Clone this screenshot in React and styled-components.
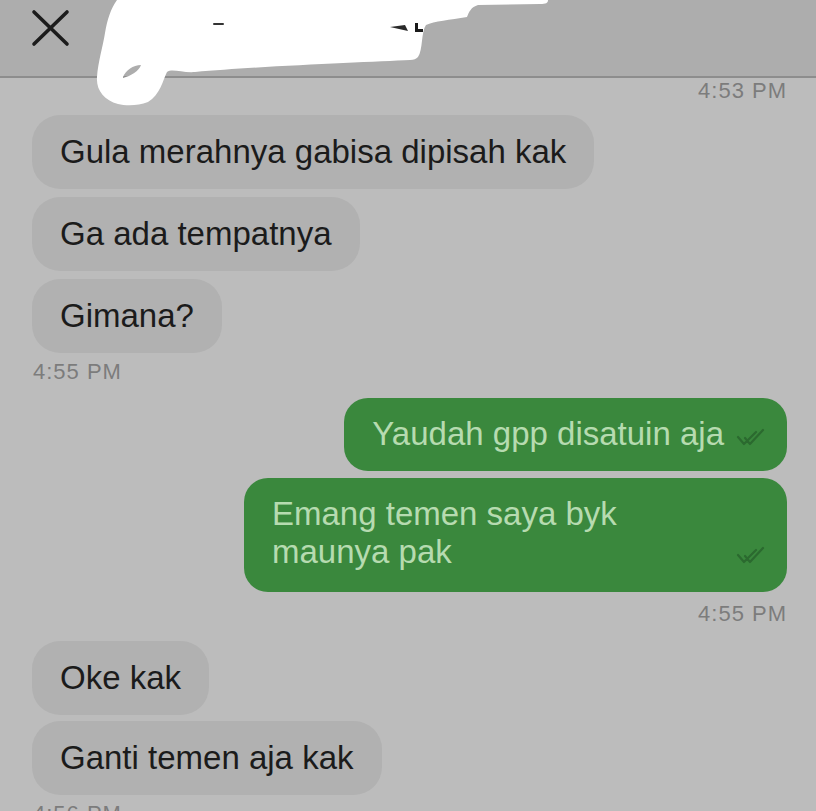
import React from "react";
import styled, { createGlobalStyle } from "styled-components";

const GlobalStyle = createGlobalStyle`
  html, body {
    margin: 0;
    padding: 0;
    background: #bcbcbc;
  }
  * {
    box-sizing: border-box;
  }
`;

const messages = [
  { kind: "time", side: "right", text: "4:53 PM", top: 2 },
  { kind: "in", text: "Gula merahnya gabisa dipisah kak", top: 13 },
  { kind: "in", text: "Ga ada tempatnya", top: 8 },
  { kind: "in", text: "Gimana?", top: 8 },
  { kind: "time", side: "left", text: "4:55 PM", top: 8 },
  { kind: "out", text: "Yaudah gpp disatuin aja", top: 15 },
  { kind: "out", text: "Emang temen saya byk maunya pak", top: 7, tall: true },
  { kind: "time", side: "right", text: "4:55 PM", top: 11 },
  { kind: "in", text: "Oke kak", top: 16 },
  { kind: "in", text: "Ganti temen aja kak", top: 6 },
  { kind: "time", side: "left", text: "4:56 PM", top: 8 },
];

const CloseIcon = () => (
  <svg width="40" height="38" viewBox="0 0 40 38">
    <path
      d="M3 3 L36 35 M36 3 L3 35"
      stroke="#1c1c1c"
      strokeWidth="3.6"
      strokeLinecap="round"
      fill="none"
    />
  </svg>
);

const DoubleCheck = () => (
  <svg width="30" height="22" viewBox="0 0 30 22">
    <path
      d="M2 11 L8 18 L20 6 M9 12 L14 18 L27 4"
      stroke="#2b6a2f"
      strokeWidth="2.2"
      strokeLinecap="round"
      strokeLinejoin="round"
      fill="none"
    />
  </svg>
);

// white marker scribble that hides the contact name
const Scribble = () => (
  <ScribbleSvg width="560" height="110" viewBox="0 0 560 110">
    <path
      d="M117 0 L548 0 C548 3 546 4 540 4 L478 5 C471 7 469 12 467 17
         C450 20 434 21 426 25 C421 32 423 50 418 57 C416 59 414 60 410 60
         C370 62 260 66 195 72 C182 73 172 68 167 72 C163 80 160 95 148 102
         C138 106 126 106 118 104 C104 100 96 90 97 77
         C98 62 103 46 105 33 C107 20 111 8 117 0 Z
         M123 77 C126 70 133 65 141 65 C139 71 131 76 123 78 Z"
      fill="#ffffff"
      fillRule="evenodd"
    />
    <rect x="213" y="23" width="11" height="2" rx="1" fill="#333" />
    <path d="M390 27 L405 25 L408 31 Z" fill="#2a2a2a" />
    <path d="M415 23 L418 23 L418 29 L423 29 L423 32 L415 32 Z" fill="#1a1a1a" />
  </ScribbleSvg>
);

export default function App() {
  return (
    <Screen>
      <GlobalStyle />
      <Header>
        <CloseButton>
          <CloseIcon />
        </CloseButton>
      </Header>
      <Scribble />
      <Thread>
        {messages.map((m, i) => {
          if (m.kind === "time") {
            return (
              <Stamp key={i} $side={m.side} $top={m.top}>
                {m.text}
              </Stamp>
            );
          }
          if (m.kind === "in") {
            return (
              <InBubble key={i} $top={m.top}>
                {m.text}
              </InBubble>
            );
          }
          return (
            <OutBubble key={i} $top={m.top} $tall={m.tall}>
              <OutText>{m.text}</OutText>
              <CheckWrap>
                <DoubleCheck />
              </CheckWrap>
            </OutBubble>
          );
        })}
      </Thread>
    </Screen>
  );
}

const Screen = styled.div`
  position: relative;
  width: 816px;
  height: 811px;
  overflow: hidden;
  background: #bcbcbc;
  font-family: "Liberation Sans", Arial, Helvetica, sans-serif;
`;

const Header = styled.div`
  height: 78px;
  display: flex;
  align-items: flex-start;
  padding: 9px 0 0 31px;
  background: #adadad;
  border-bottom: 2px solid #8d8d8d;
`;

const CloseButton = styled.div`
  width: 40px;
  height: 38px;
  display: flex;
`;

const ScribbleSvg = styled.svg`
  position: absolute;
  left: 0;
  top: 0;
`;

const Thread = styled.div`
  display: flex;
  flex-direction: column;
  padding: 0 29px 0 32px;
`;

const Stamp = styled.div`
  align-self: ${(p) => (p.$side === "right" ? "flex-end" : "flex-start")};
  margin-top: ${(p) => p.$top}px;
  margin-left: ${(p) => (p.$side === "left" ? 1 : 0)}px;
  font-size: 22px;
  line-height: 22px;
  letter-spacing: 1px;
  color: #7c7c7c;
`;

const InBubble = styled.div`
  align-self: flex-start;
  margin-top: ${(p) => p.$top}px;
  padding: 18px 28px;
  background: #b1b1b1;
  border-radius: 28px;
  font-size: 33px;
  line-height: 38px;
  color: #1b1b1b;
`;

const OutBubble = styled.div`
  align-self: flex-end;
  max-width: 543px;
  margin-top: ${(p) => p.$top}px;
  display: flex;
  align-items: flex-end;
  gap: 12px;
  padding: 17px 21px ${(p) => (p.$tall ? 21 : 18)}px 28px;
  background: #3a883d;
  border-radius: 24px;
`;

const OutText = styled.div`
  font-size: 33px;
  line-height: 38px;
  color: #b6dbb0;
`;

const CheckWrap = styled.div`
  flex-shrink: 0;
  display: flex;
  padding-bottom: 5px;
`;
